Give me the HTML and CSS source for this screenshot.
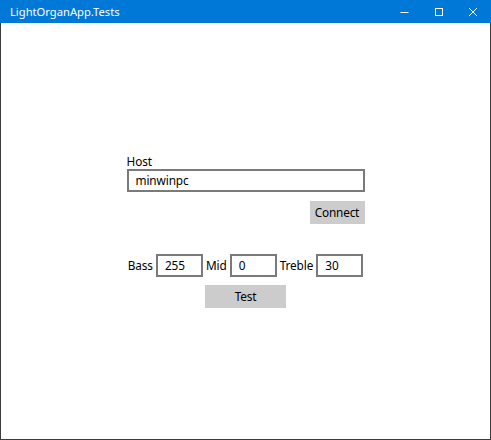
FILE: index.html
```html
<!DOCTYPE html>
<html>
<head>
<meta charset="utf-8">
<link rel="stylesheet" href="styles.css">
</head>
<body>
<div class="window">
  <div class="titlebar">
    <span class="title">LightOrganApp.Tests</span>
    <div class="controls">
      <span class="ctl"><svg width="10" height="10" viewBox="0 0 10 10"><path d="M0.5 5.5h8" stroke="#fff" stroke-width="1"/></svg></span>
      <span class="ctl"><svg width="10" height="10" viewBox="0 0 10 10"><rect x="1.5" y="1.5" width="7" height="7" fill="none" stroke="#fff" stroke-width="1"/></svg></span>
      <span class="ctl"><svg width="10" height="10" viewBox="0 0 10 10"><path d="M1 1L9 9M9 1L1 9" stroke="#fff" stroke-width="1"/></svg></span>
    </div>
  </div>
  <div class="content">
    <div class="stack">
      <div class="host">
        <div class="label">Host</div>
        <div class="input wide">minwinpc</div>
        <div class="right"><div class="btn connect">Connect</div></div>
      </div>
      <div class="levels">
        <span class="label">Bass</span><div class="input small">255</div>
        <span class="label">Mid</span><div class="input small">0</div>
        <span class="label">Treble</span><div class="input small">30</div>
      </div>
      <div class="btn test">Test</div>
    </div>
  </div>
</div>
</body>
</html>
```
FILE: styles.css
```css
html, body {
  margin: 0;
  padding: 0;
  height: 100%;
}
body {
  font-family: "Noto Sans", sans-serif;
  color: #000;
  background: #fff;
}
.window {
  height: 440px;
  width: 491px;
  box-sizing: border-box;
  display: flex;
  flex-direction: column;
  border: 1px solid #3c3c3c;
  border-top: none;
}
.titlebar {
  height: 23px;
  margin: 0 -1px;
  background: #0078d7;
  color: #fff;
  display: flex;
  align-items: center;
  justify-content: space-between;
  flex-shrink: 0;
}
.title {
  font-size: 11.2px;
  padding-left: 10px;
  padding-bottom: 1px;
}
.controls {
  display: flex;
  padding-right: 1px;
}
.ctl {
  width: 34px;
  display: flex;
  justify-content: center;
}
.content {
  flex: 1;
  display: flex;
  align-items: center;
  justify-content: center;
}
.stack {
  display: flex;
  flex-direction: column;
  align-items: center;
}
.host {
  width: 238px;
  display: flex;
  flex-direction: column;
}
.label {
  font-size: 11.8px;
  line-height: 15px;
  letter-spacing: -0.1px;
}
.input {
  box-sizing: border-box;
  height: 23px;
  border: 2px solid #7a7a7a;
  font-size: 11.8px;
  letter-spacing: -0.1px;
  line-height: 19px;
  padding-left: 7px;
}
.wide {
  width: 238px;
}
.right {
  display: flex;
  justify-content: flex-end;
  margin-top: 9px;
}
.btn {
  background: #cccccc;
  height: 23px;
  font-size: 11.8px;
  letter-spacing: -0.2px;
  line-height: 23px;
  text-align: center;
}
.connect {
  width: 55px;
}
.levels {
  display: flex;
  align-items: center;
  margin-top: 30px;
  gap: 3px;
}
.small {
  width: 47px;
}
.test {
  width: 81px;
  margin-top: 8px;
}
```
